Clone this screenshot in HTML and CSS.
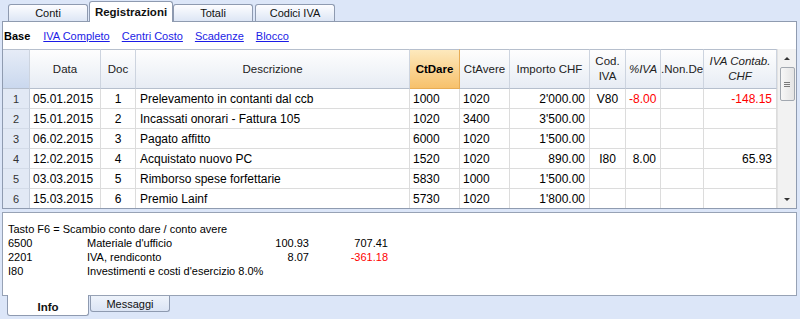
FILE: index.html
```html
<!DOCTYPE html>
<html lang="it">
<head>
  <meta charset="UTF-8">
  <title>Registrazioni</title>
  <link rel="stylesheet" href="styles.css">
</head>
<body>
  <div class="app">
    <div class="tabs">
      <div class="tab">Conti</div>
      <div class="tab active">Registrazioni</div>
      <div class="tab">Totali</div>
      <div class="tab">Codici IVA</div>
    </div>

    <div class="panel">
      <div class="views">
        <b>Base</b>
        <a href="#">IVA Completo</a>
        <a href="#">Centri Costo</a>
        <a href="#">Scadenze</a>
        <a href="#">Blocco</a>
      </div>

      <div class="grid">
        <table>
          <colgroup>
            <col style="width:27px"><col style="width:71px"><col style="width:35px">
            <col style="width:274px"><col style="width:50px"><col style="width:50px">
            <col style="width:80px"><col style="width:36px"><col style="width:35px">
            <col style="width:43px"><col style="width:73px">
          </colgroup>
          <thead>
            <tr>
              <th class="corner"></th>
              <th>Data</th>
              <th>Doc</th>
              <th>Descrizione</th>
              <th class="sel">CtDare</th>
              <th>CtAvere</th>
              <th>Importo CHF</th>
              <th>Cod.<br>IVA</th>
              <th class="it">%IVA</th>
              <th class="clip">.Non.De</th>
              <th class="it">IVA Contab.<br>CHF</th>
            </tr>
          </thead>
          <tbody>
            <tr>
              <td class="num">1</td><td>05.01.2015</td><td class="c">1</td>
              <td class="desc">Prelevamento in contanti dal ccb</td>
              <td>1000</td><td>1020</td><td class="r">2'000.00</td>
              <td class="c">V80</td><td class="r neg">-8.00</td><td></td><td class="r neg">-148.15</td>
            </tr>
            <tr>
              <td class="num">2</td><td>15.01.2015</td><td class="c">2</td>
              <td class="desc">Incassati onorari - Fattura 105</td>
              <td>1020</td><td>3400</td><td class="r">3'500.00</td>
              <td></td><td></td><td></td><td></td>
            </tr>
            <tr>
              <td class="num">3</td><td>06.02.2015</td><td class="c">3</td>
              <td class="desc">Pagato affitto</td>
              <td>6000</td><td>1020</td><td class="r">1'500.00</td>
              <td></td><td></td><td></td><td></td>
            </tr>
            <tr>
              <td class="num">4</td><td>12.02.2015</td><td class="c">4</td>
              <td class="desc">Acquistato nuovo PC</td>
              <td>1520</td><td>1020</td><td class="r">890.00</td>
              <td class="c">I80</td><td class="r">8.00</td><td></td><td class="r">65.93</td>
            </tr>
            <tr>
              <td class="num">5</td><td>03.03.2015</td><td class="c">5</td>
              <td class="desc">Rimborso spese forfettarie</td>
              <td>5830</td><td>1000</td><td class="r">1'500.00</td>
              <td></td><td></td><td></td><td></td>
            </tr>
            <tr>
              <td class="num">6</td><td>15.03.2015</td><td class="c">6</td>
              <td class="desc">Premio Lainf</td>
              <td>5730</td><td>1020</td><td class="r">1'800.00</td>
              <td></td><td></td><td></td><td></td>
            </tr>
          </tbody>
        </table>

        <div class="scrollbar">
          <div class="arrow up"></div>
          <div class="thumb"><span></span><span></span><span></span></div>
          <div class="track"></div>
          <div class="arrow down"></div>
        </div>
      </div>
    </div>

    <div class="info">
      <div class="line">Tasto F6 = Scambio conto dare / conto avere</div>
      <div class="line">
        <span class="code">6500</span><span class="label">Materiale d'ufficio</span>
        <span class="v1">100.93</span><span class="v2">707.41</span>
      </div>
      <div class="line">
        <span class="code">2201</span><span class="label">IVA, rendiconto</span>
        <span class="v1">8.07</span><span class="v2 neg">-361.18</span>
      </div>
      <div class="line">
        <span class="code">I80</span><span class="label">Investimenti e costi d'esercizio 8.0%</span>
      </div>
    </div>

    <div class="tabs bottom">
      <div class="tab active">Info</div>
      <div class="tab">Messaggi</div>
    </div>
  </div>
</body>
</html>
```

FILE: styles.css
```css
body {
  margin: 0;
  background: #dce6f8;
  font-family: "Liberation Sans", Arial, sans-serif;
  font-size: 11px;
  color: #000;
}

.app {
  padding: 0 3px 0 2px;
}

/* tab strips */

.tabs {
  display: flex;
  align-items: flex-end;
  height: 22px;
  padding-left: 6px;
  position: relative;
  z-index: 1;
}

.tab {
  box-sizing: border-box;
  width: 80px;
  height: 17px;
  margin: 0 2px 1px 0;
  border: 1px solid #8e9ab0;
  border-bottom: none;
  border-radius: 3px 3px 0 0;
  background: linear-gradient(#fdfdff, #dde6f5);
  display: flex;
  align-items: center;
  justify-content: center;
  color: #111;
}

.tab.active {
  width: 84px;
  height: 21px;
  margin: 0 0 0 -1px;
  background: #fff;
  font-weight: bold;
  font-size: 11.5px;
}

.tabs.bottom {
  align-items: flex-start;
  height: 21px;
  margin-top: -1px;
}

.tabs.bottom .tab {
  height: 16px;
  margin: 1px 1px 0 0;
  border: 1px solid #8e9ab0;
  border-top: none;
  border-radius: 0 0 3px 3px;
  background: linear-gradient(#eef3fb, #dbe4f4);
}

.tabs.bottom .tab.active {
  width: 82px;
  height: 21px;
  margin: 0 1px 0 -1px;
  background: #fff;
  padding-top: 3px;
}

/* main panel */

.panel {
  margin-top: -1px;
  border: 1px solid #8f9bb0;
  background: #fff;
}

.views {
  height: 27px;
  display: flex;
  align-items: center;
  gap: 12px;
  padding-left: 1px;
}

.views b {
  margin-right: 1px;
}

.views a {
  color: #1c1ce6;
}

.grid {
  display: flex;
  height: 159px;
  overflow: hidden;
}

table {
  width: 774px;
  flex: none;
  table-layout: fixed;
  border-collapse: separate;
  border-spacing: 0;
}

thead tr {
  height: 40px;
}

th {
  padding: 0;
  font-weight: normal;
  font-size: 11.5px;
  line-height: 15px;
  color: #222;
  text-align: center;
  background: linear-gradient(#fefefe, #e7ecf4);
  border-top: 1px solid #b6bfcd;
  border-right: 1px solid #cdd4df;
  border-bottom: 1px solid #b6bfcd;
  overflow: hidden;
  white-space: nowrap;
}

th.corner {
  background: linear-gradient(#e6ecf7, #cad8ee);
}

th.sel {
  background: linear-gradient(#fde9bd, #f7c16c);
  border-right-color: #e7ac55;
  border-bottom-color: #e7ac55;
  font-weight: bold;
  color: #000;
}

th.it {
  font-style: italic;
}

tbody tr {
  height: 20px;
}

td {
  padding: 0 3px;
  font-size: 12px;
  white-space: nowrap;
  overflow: hidden;
  border-right: 1px solid #dcdcdc;
  border-bottom: 1px solid #dcdcdc;
}

td.num {
  padding: 0;
  text-align: center;
  font-size: 11px;
  color: #333;
  background: #e2e9f5;
  border-right-color: #c3ccda;
  border-bottom-color: #d3dbe8;
}

td.desc {
  padding-left: 4px;
}

td.c {
  text-align: center;
}

td.r {
  text-align: right;
  padding-right: 4px;
}

.neg {
  color: #f00;
}

/* vertical scrollbar */

.scrollbar {
  width: 19px;
  flex: none;
  display: flex;
  flex-direction: column;
  align-items: center;
  background: #f2f2f2;
  border-left: 1px solid #e2e2e2;
  box-sizing: border-box;
}

.arrow {
  height: 18px;
  display: flex;
  align-items: center;
}

.arrow::before {
  content: "";
  border-left: 3px solid transparent;
  border-right: 3px solid transparent;
}

.arrow.up::before {
  border-bottom: 3px solid #333;
}

.arrow.down::before {
  border-top: 3px solid #333;
}

.thumb {
  box-sizing: border-box;
  width: 15px;
  height: 34px;
  border: 1px solid #a2a8b0;
  border-radius: 2px;
  background: linear-gradient(90deg, #f7f7f7, #e4e4e4);
  display: flex;
  flex-direction: column;
  align-items: center;
  justify-content: center;
  gap: 1px;
}

.thumb span {
  width: 6px;
  height: 1px;
  background: #7a7a7a;
}

.track {
  flex: 1;
}

/* info panel */

.info {
  box-sizing: border-box;
  margin-top: 3px;
  height: 84px;
  padding: 9px 0 0 5px;
  border: 1px solid #97a2b5;
  background: #fff;
  font-size: 11px;
}

.info .line {
  display: flex;
  height: 14px;
  line-height: 14px;
  white-space: nowrap;
}

.info .code {
  width: 79px;
}

.info .label {
  width: 170px;
}

.info .v1 {
  width: 52px;
  text-align: right;
}

.info .v2 {
  width: 79px;
  text-align: right;
}
```
